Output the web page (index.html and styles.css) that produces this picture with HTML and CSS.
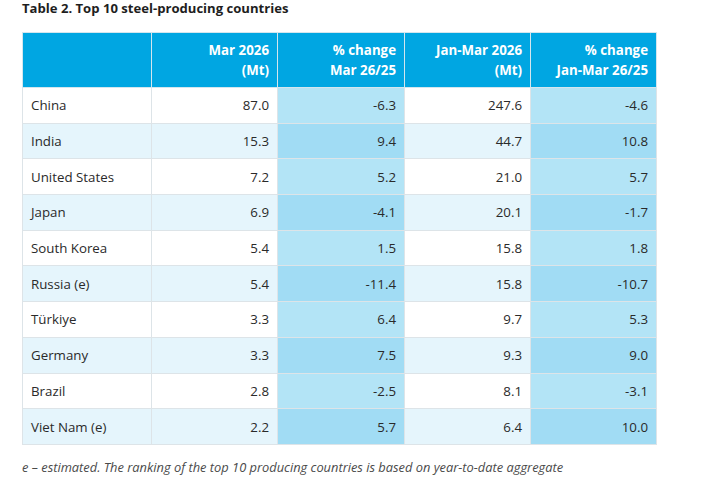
FILE: index.html
```html
<!DOCTYPE html>
<html lang="en">
<head>
<meta charset="utf-8">
<title>Top 10 steel-producing countries</title>
<link rel="stylesheet" href="styles.css">
</head>
<body>
<div class="wrap">
  <h2 class="title">Table 2. Top 10 steel-producing countries</h2>
  <table class="steel">
    <colgroup>
      <col class="c1"><col class="c2"><col class="c3"><col class="c4"><col class="c5">
    </colgroup>
    <thead>
      <tr>
        <th></th>
        <th>Mar 2026<br>(Mt)</th>
        <th>% change<br>Mar 26/25</th>
        <th>Jan-Mar 2026<br>(Mt)</th>
        <th>% change<br>Jan-Mar 26/25</th>
      </tr>
    </thead>
    <tbody>
      <tr><td>China</td><td>87.0</td><td class="pc">-6.3</td><td>247.6</td><td class="pc">-4.6</td></tr>
      <tr><td>India</td><td>15.3</td><td class="pc">9.4</td><td>44.7</td><td class="pc">10.8</td></tr>
      <tr><td>United States</td><td>7.2</td><td class="pc">5.2</td><td>21.0</td><td class="pc">5.7</td></tr>
      <tr><td>Japan</td><td>6.9</td><td class="pc">-4.1</td><td>20.1</td><td class="pc">-1.7</td></tr>
      <tr><td>South Korea</td><td>5.4</td><td class="pc">1.5</td><td>15.8</td><td class="pc">1.8</td></tr>
      <tr><td>Russia (e)</td><td>5.4</td><td class="pc">-11.4</td><td>15.8</td><td class="pc">-10.7</td></tr>
      <tr><td>Türkiye</td><td>3.3</td><td class="pc">6.4</td><td>9.7</td><td class="pc">5.3</td></tr>
      <tr><td>Germany</td><td>3.3</td><td class="pc">7.5</td><td>9.3</td><td class="pc">9.0</td></tr>
      <tr><td>Brazil</td><td>2.8</td><td class="pc">-2.5</td><td>8.1</td><td class="pc">-3.1</td></tr>
      <tr><td>Viet Nam (e)</td><td>2.2</td><td class="pc">5.7</td><td>6.4</td><td class="pc">10.0</td></tr>
    </tbody>
  </table>
  <p class="note">e – estimated. The ranking of the top 10 producing countries is based on year-to-date aggregate</p>
</div>
</body>
</html>
```
FILE: styles.css
```css
html, body {
  margin: 0;
  padding: 0;
  background: #ffffff;
}
body {
  font-family: "Open Sans", "Liberation Sans", sans-serif;
  color: #2a2a2a;
}
.wrap {
  padding: 1px 0 0 22px;
}
.title {
  margin: 0 0 16px 0;
  font-size: 13.1px;
  line-height: 15px;
  font-weight: 700;
  color: #1e1e1e;
}
.steel {
  border-collapse: collapse;
  table-layout: fixed;
  width: 634px;
  font-size: 13.3px;
}
.c1 { width: 129px; }
.c2 { width: 126px; }
.c3 { width: 127px; }
.c4 { width: 126px; }
.c5 { width: 126px; }
.steel th {
  background: #00a6e2;
  color: #ffffff;
  font-weight: 700;
  text-align: right;
  line-height: 20px;
  padding: 6.5px 8px 7.5px;
  border: 1px solid #d4e6ee;
}
.steel td {
  line-height: 20px;
  padding: 7.35px 8px;
  border: 1px solid #dde4e8;
  text-align: right;
  background: #ffffff;
  white-space: nowrap;
}
.steel td:first-child {
  text-align: left;
}
.steel tbody tr:nth-child(even) td {
  background: #e5f5fc;
}
.steel td.pc {
  background: #b3e4f6;
}
.steel tbody tr:nth-child(even) td.pc {
  background: #a1dcf4;
}
.note {
  margin: 13px 0 0 0;
  font-size: 12.85px;
  line-height: 18px;
  font-style: italic;
  color: #4a4a4a;
}
```
